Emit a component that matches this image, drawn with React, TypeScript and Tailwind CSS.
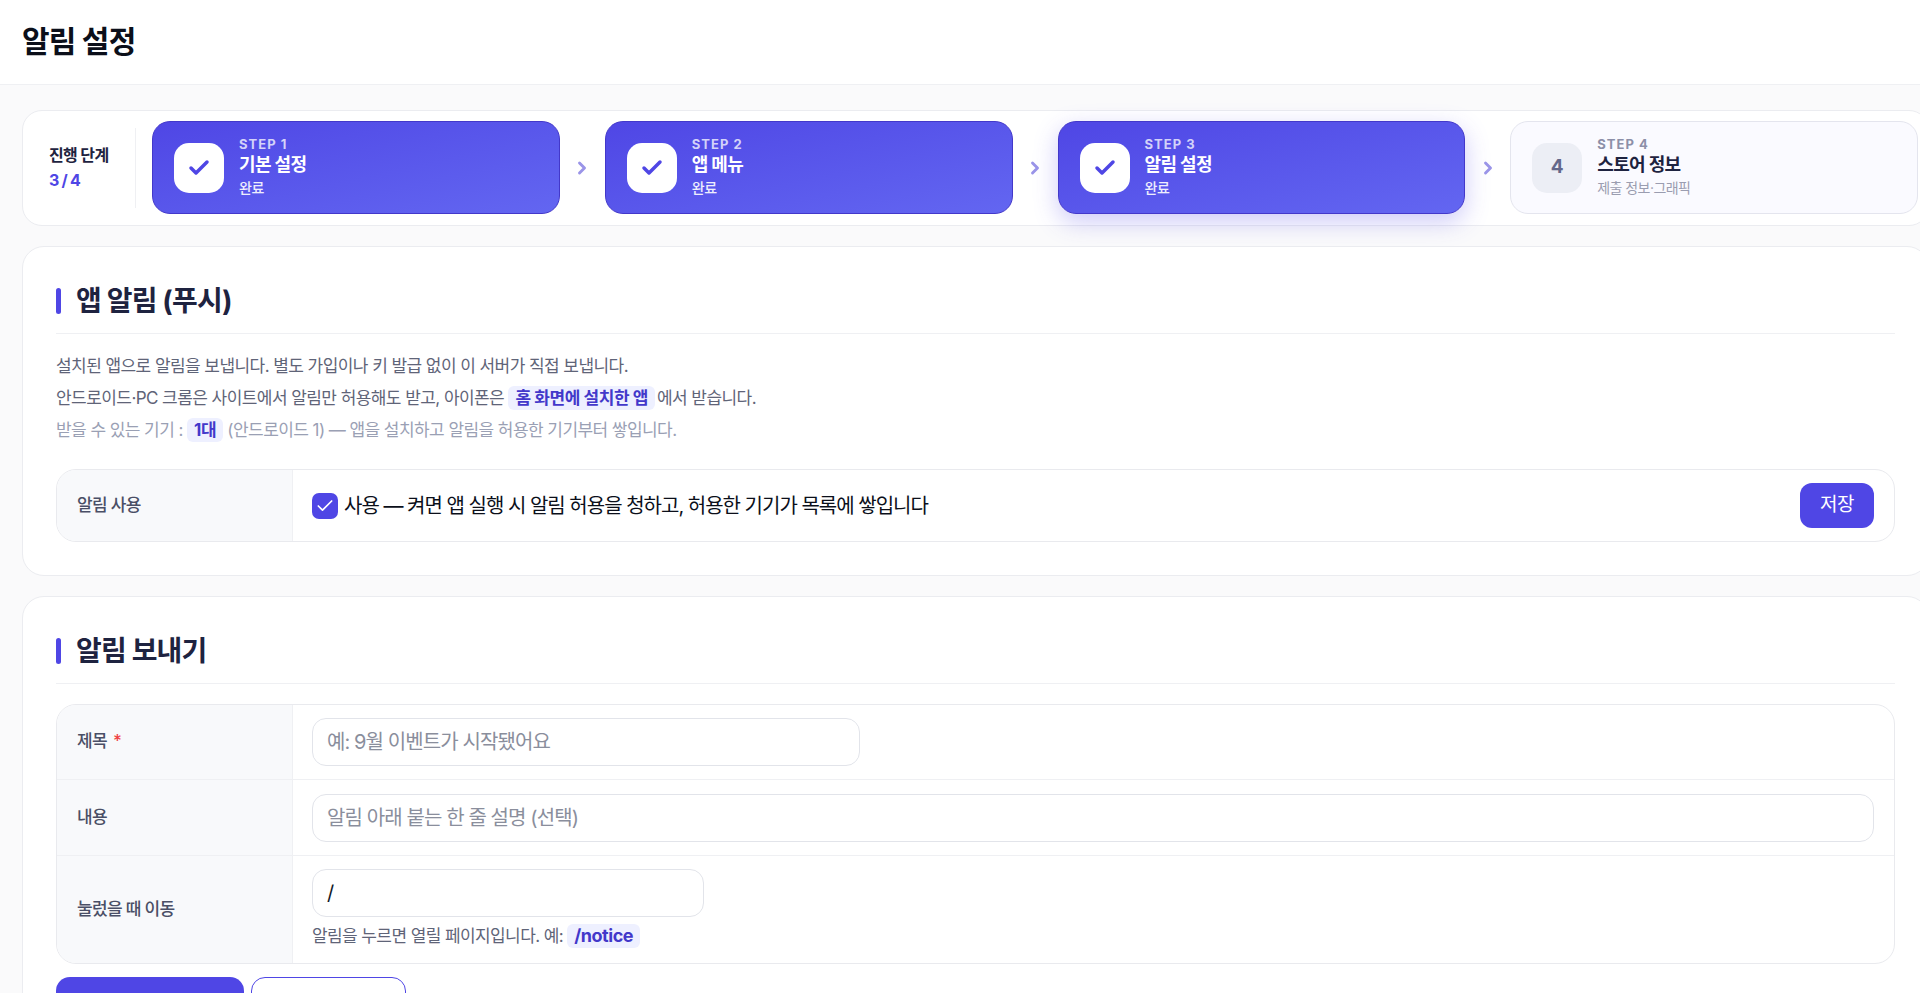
import React from "react";
import { Check, ChevronRight } from "lucide-react";

const steps = [
  { step: "STEP 1", title: "기본 설정", sub: "완료", done: true },
  { step: "STEP 2", title: "앱 메뉴", sub: "완료", done: true },
  { step: "STEP 3", title: "알림 설정", sub: "완료", done: true, current: true },
  { step: "STEP 4", title: "스토어 정보", sub: "제출 정보·그래픽", num: "4" },
];

function StepCard({ s }: { s: (typeof steps)[number] }) {
  if (s.done) {
    return (
      <div className={`flex-1 h-[93px] rounded-[18px] border border-[#4338ca] bg-gradient-to-br from-[#4f46e5] to-[#6366f1] flex items-center pl-[21px] gap-[15px] ${s.current ? "shadow-[0_8px_24px_rgba(79,70,229,0.28)]" : ""}`}>
        <div className="w-[50px] h-[50px] rounded-[15px] bg-white flex items-center justify-center">
          <Check className="w-[24px] h-[24px] text-[#4f46e5]" strokeWidth={3.5} />
        </div>
        <div className="flex flex-col pb-[1px]">
          <span className="text-[13px] leading-[16px] font-bold tracking-[0.08em] text-white/75">{s.step}</span>
          <span className="text-[18px] leading-[25px] font-bold tracking-[-0.035em] text-white">{s.title}</span>
          <span className="text-[14px] leading-[21px] font-medium tracking-[-0.03em] text-white/90">{s.sub}</span>
        </div>
      </div>
    );
  }
  return (
    <div className="flex-1 h-[93px] rounded-[18px] border border-[#e4e5ee] bg-[#fafaff] flex items-center pl-[21px] gap-[15px]">
      <div className="w-[50px] h-[50px] rounded-[15px] bg-[#eceef5] flex items-center justify-center text-[19px] font-bold text-[#64688a]">
        {s.num}
      </div>
      <div className="flex flex-col pb-[1px]">
        <span className="text-[13px] leading-[16px] font-bold tracking-[0.08em] text-[#8c8fa8]">{s.step}</span>
        <span className="text-[18px] leading-[25px] font-bold tracking-[-0.035em] text-[#1e2340]">{s.title}</span>
        <span className="text-[14px] leading-[21px] tracking-[-0.04em] text-[#9a9db0]">{s.sub}</span>
      </div>
    </div>
  );
}

function SectionTitle({ children }: { children: React.ReactNode }) {
  return (
    <div className="h-[87px] border-b border-[#eff0f3] flex items-center gap-[15px] pt-[21px]">
      <span className="w-[5px] h-[26px] rounded-full bg-[#4f46e5]" />
      <h2 className="text-[28px] leading-[36px] font-bold tracking-[-0.03em] text-[#1e2340]">{children}</h2>
    </div>
  );
}

function Tag({ children }: { children: React.ReactNode }) {
  return <span className="inline-block px-[7px] rounded-[6px] bg-[#eef0ff] text-[#4338ca] font-bold leading-[24px] tracking-[-0.025em]">{children}</span>;
}

function FieldRow({ label, required, last, children }: { label: string; required?: boolean; last?: boolean; children: React.ReactNode }) {
  return (
    <div className={`flex ${last ? "" : "border-b border-[#eff0f3]"}`}>
      <div className="w-[236px] shrink-0 bg-[#f8f9fb] border-r border-[#eff0f3] pl-[20px] flex items-center text-[17px] font-medium tracking-[-0.04em] text-[#4a4f66]">
        {label}
        {required && <span className="ml-[6px] text-[#ef4444]">*</span>}
      </div>
      <div className="flex-1 pl-[19px] pr-[20px] py-[13px]">{children}</div>
    </div>
  );
}

const inputCls = "h-[48px] rounded-[14px] border border-[#e2e4ea] bg-white px-[14px] text-[20px] tracking-[-0.045em] text-[#111827] placeholder:text-[#8a8e9c] outline-none block";

export default function App() {
  return (
    <div className="h-[993px] w-full overflow-hidden bg-[#fafafb] font-['Inter','Noto_Sans_CJK_KR',sans-serif]">
      <header className="h-[85px] bg-white border-b border-[#eff0f3] flex items-center pl-[22px] pb-[2px]">
        <h1 className="text-[30px] leading-[40px] font-bold tracking-[-0.027em] text-[#0b0f1a]">알림 설정</h1>
      </header>

      <main className="w-[1929px] pl-[22px] pt-[25px] flex flex-col gap-[20px]">
        {/* stepper */}
        <div className="h-[116px] rounded-[20px] border border-[#ebecf0] bg-white flex items-center pl-[26px] pr-[10px] pb-[1px]">
          <div className="w-[87px] h-[80px] shrink-0 border-r border-[#eff0f3] flex flex-col justify-center mr-[16px]">
            <span className="text-[16px] leading-[24px] font-bold tracking-[-0.04em] text-[#1e2340]">진행 단계</span>
            <span className="text-[16px] leading-[26px] font-bold tracking-[-0.05em] text-[#4f46e5]">3 / 4</span>
          </div>
          {steps.map((s, i) => (
            <React.Fragment key={s.step}>
              <StepCard s={s} />
              {i < steps.length - 1 && (
                <div className="w-[45px] shrink-0 flex justify-center">
                  <ChevronRight className="w-[20px] h-[20px] text-[#9a94e8]" strokeWidth={3.5} />
                </div>
              )}
            </React.Fragment>
          ))}
        </div>

        {/* push section */}
        <section className="h-[330px] rounded-[22px] border border-[#ebecf0] bg-white px-[33px]">
          <SectionTitle>앱 알림 (푸시)</SectionTitle>
          <div className="pt-[16px] text-[17px] leading-[32px] tracking-[-0.033em] text-[#5f6478]">
            <p>설치된 앱으로 알림을 보냅니다. 별도 가입이나 키 발급 없이 이 서버가 직접 보냅니다.</p>
            <p>
              안드로이드·PC 크롬은 사이트에서 알림만 허용해도 받고, 아이폰은 <Tag>홈 화면에 설치한 앱</Tag>
              <span className="ml-[2px]">에서 받습니다.</span>
            </p>
            <p className="text-[#9aa0b4]">
              받을 수 있는 기기 : <Tag>1대</Tag> (안드로이드 1) — 앱을 설치하고 알림을 허용한 기기부터 쌓입니다.
            </p>
          </div>
          <div className="mt-[23px] h-[73px] rounded-[20px] border border-[#e9eaee] overflow-hidden flex">
            <div className="w-[236px] shrink-0 bg-[#f8f9fb] border-r border-[#eff0f3] pl-[20px] flex items-center text-[17px] font-medium tracking-[-0.04em] text-[#4a4f66]">
              알림 사용
            </div>
            <div className="flex-1 flex items-center pl-[19px] pr-[20px]">
              <span className="w-[26px] h-[26px] rounded-[7px] bg-[#4f46e5] flex items-center justify-center">
                <Check className="w-[20px] h-[20px] text-white" strokeWidth={2} />
              </span>
              <span className="ml-[6px] text-[20px] tracking-[-0.05em] text-[#0b0f1a]">사용 — 켜면 앱 실행 시 알림 허용을 청하고, 허용한 기기가 목록에 쌓입니다</span>
              <button className="ml-auto w-[74px] h-[45px] rounded-[12px] bg-[#4f46e5] text-white text-[19px] tracking-[-0.02em]">저장</button>
            </div>
          </div>
        </section>

        {/* send section */}
        <section className="rounded-[22px] border border-[#ebecf0] bg-white px-[33px] pb-[40px]">
          <SectionTitle>알림 보내기</SectionTitle>
          <div className="mt-[20px] rounded-[20px] border border-[#e9eaee] overflow-hidden">
            <FieldRow label="제목" required>
              <input className={`${inputCls} w-[548px]`} placeholder="예: 9월 이벤트가 시작됐어요" readOnly />
            </FieldRow>
            <FieldRow label="내용">
              <input className={`${inputCls} w-full mt-[1px]`} placeholder="알림 아래 붙는 한 줄 설명 (선택)" readOnly />
            </FieldRow>
            <FieldRow label="눌렀을 때 이동" last>
              <input className={`${inputCls} w-[392px]`} value="/" readOnly />
              <p className="mt-[6px] pb-[1px] text-[17px] leading-[26px] tracking-[-0.035em] text-[#5f6478]">
                알림을 누르면 열릴 페이지입니다. 예: <span className="text-[18px]"><Tag>/notice</Tag></span>
              </p>
            </FieldRow>
          </div>
          <div className="mt-[13px] flex gap-[7px]">
            <button className="w-[188px] h-[48px] rounded-[14px] bg-[#4f46e5]" />
            <button className="w-[155px] h-[48px] rounded-[14px] border border-[#4f46e5] bg-white" />
          </div>
        </section>
      </main>
    </div>
  );
}
